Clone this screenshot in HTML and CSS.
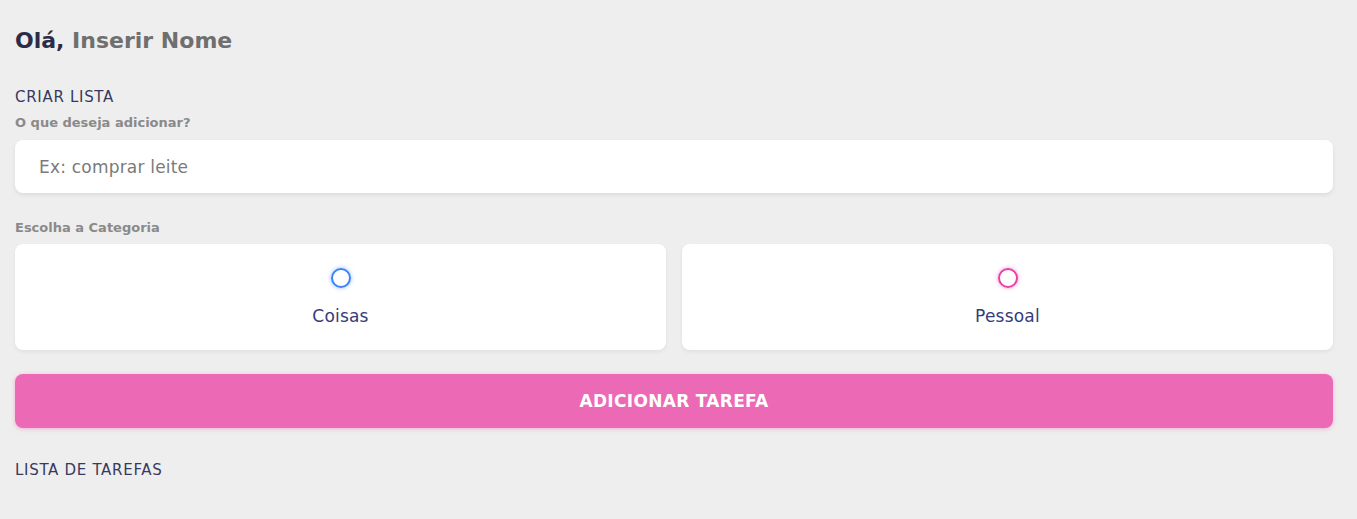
FILE: index.html
```html
<!DOCTYPE html>
<html lang="pt">
<head>
<meta charset="utf-8">
<link rel="stylesheet" href="styles.css">
</head>
<body>
<main class="app">
  <h1 class="greeting">Olá, <span class="name">Inserir Nome</span></h1>
  <section class="create">
    <h2 class="section-title">CRIAR LISTA</h2>
    <h3 class="label">O que deseja adicionar?</h3>
    <input class="text-input" type="text" placeholder="Ex: comprar leite">
    <h3 class="label label-cat">Escolha a Categoria</h3>
    <div class="options">
      <label class="option">
        <span class="bubble bubble-business"></span>
        <span class="option-text">Coisas</span>
      </label>
      <label class="option">
        <span class="bubble bubble-personal"></span>
        <span class="option-text">Pessoal</span>
      </label>
    </div>
    <button class="add-btn">ADICIONAR TAREFA</button>
  </section>
  <h2 class="section-title list-title">LISTA DE TAREFAS</h2>
</main>
</body>
</html>
```

FILE: styles.css
```css
* { box-sizing: border-box; }
html, body { margin: 0; background: #eeeeee; }
body {
  font-family: "DejaVu Sans", "Open Sans", sans-serif;
  color: #32325a;
}
.app {
  padding: 26px 24px 0 15px;
}
.greeting {
  margin: 0;
  font-size: 22px;
  line-height: 30px;
  font-weight: 700;
  color: #2c2b48;
}
.greeting .name { color: #6f6f6f; }
.section-title {
  margin: 0;
  font-size: 15px;
  font-weight: 400;
  color: #363a5e;
  line-height: 20px;
  letter-spacing: 0.7px;
}
.create { margin-top: 31px; }
.label {
  margin: 7px 0 9px;
  font-size: 13px;
  font-weight: 700;
  color: #8a8a8a;
  line-height: 17px;
}
.text-input {
  display: block;
  width: 100%;
  height: 53px;
  border: none;
  border-radius: 8px;
  background: #fff;
  box-shadow: 0 2px 4px rgba(0,0,0,0.08);
  padding: 0 24px;
  font-family: inherit;
  font-size: 17px;
  letter-spacing: 0.2px;
  color: #333;
  outline: none;
}
.text-input::placeholder { color: #7a7a7a; }
.label-cat { margin: 26px 0 8px; }
.options {
  display: grid;
  grid-template-columns: 1fr 1fr;
  gap: 16px;
}
.option {
  display: flex;
  flex-direction: column;
  align-items: center;
  height: 106px;
  background: #fff;
  border-radius: 8px;
  box-shadow: 0 2px 4px rgba(0,0,0,0.06);
  padding-top: 24px;
}
.bubble {
  width: 20px;
  height: 20px;
  border-radius: 50%;
  border: 2px solid #3a82f6;
  box-shadow: 0 0 4px rgba(58,130,246,0.55);
}
.bubble-personal {
  border-color: #ea40a4;
  box-shadow: 0 0 4px rgba(234,64,164,0.55);
}
.option-text {
  margin-top: 17px;
  font-size: 17px;
  color: #353c7a;
  line-height: 22px;
  letter-spacing: 0.2px;
}
.add-btn {
  display: block;
  width: 100%;
  height: 54px;
  margin-top: 24px;
  border: none;
  border-radius: 8px;
  background: #ec69b6;
  box-shadow: 0 1px 4px rgba(234,64,164,0.35);
  color: #fff;
  font-family: inherit;
  font-size: 17px;
  font-weight: 700;
  letter-spacing: 0.3px;
}
.list-title { margin-top: 32px; }
```
